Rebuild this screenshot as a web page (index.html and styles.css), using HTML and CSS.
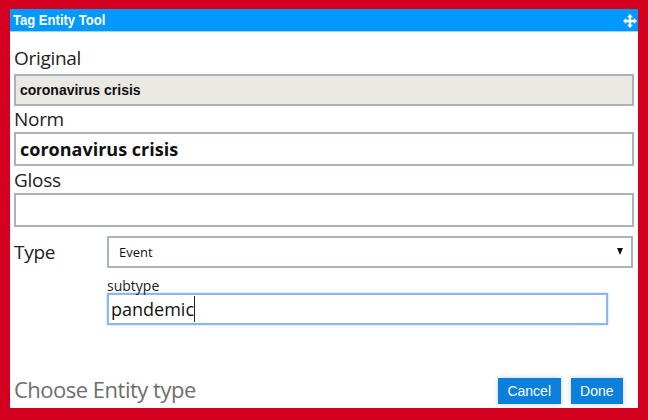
FILE: index.html
```html
<!DOCTYPE html>
<html>
<head>
<meta charset="utf-8">
<link rel="stylesheet" href="styles.css">
</head>
<body>
<div class="dialog">
  <div class="titlebar">
    <span class="title">Tag Entity Tool</span>
    <svg class="move" viewBox="0 0 14 14" width="14" height="14">
      <path d="M7 0 L10 3.2 L8.2 3.2 L8.2 5.8 L10.8 5.8 L10.8 4 L14 7 L10.8 10 L10.8 8.2 L8.2 8.2 L8.2 10.8 L10 10.8 L7 14 L4 10.8 L5.8 10.8 L5.8 8.2 L3.2 8.2 L3.2 10 L0 7 L3.2 4 L3.2 5.8 L5.8 5.8 L5.8 3.2 L4 3.2 Z" fill="#ffffff"/>
    </svg>
  </div>
  <div class="content">
    <div class="label label-first">Original</div>
    <div class="field field-readonly">coronavirus crisis</div>
    <div class="label label-norm">Norm</div>
    <div class="field field-norm">coronavirus crisis</div>
    <div class="label label-gloss">Gloss</div>
    <div class="field field-gloss"></div>
    <div class="type-row">
      <div class="type-label">Type</div>
      <div class="select">
        <span class="select-value">Event</span>
        <span class="select-arrow"></span>
      </div>
    </div>
    <div class="subtype">
      <div class="subtype-label">subtype</div>
      <div class="field field-focus"><span class="typed">pandemic</span><span class="caret"></span></div>
    </div>
    <div class="footer">
      <div class="hint">Choose Entity type</div>
      <div class="buttons">
        <div class="btn">Cancel</div>
        <div class="btn">Done</div>
      </div>
    </div>
  </div>
</div>
</body>
</html>
```
FILE: styles.css
```css
html, body {
  margin: 0;
  padding: 0;
}
body {
  background: #d3001f;
  width: 648px;
  height: 420px;
  overflow: hidden;
}
.dialog {
  margin: 9px 10px 0 10px;
  height: 399px;
  background: #ffffff;
  display: flex;
  flex-direction: column;
}
.titlebar {
  height: 22px;
  background: #0099ff;
  border-bottom: 1px solid #a6d3f5;
  display: flex;
  align-items: center;
  justify-content: space-between;
  padding: 0 1px 0 3px;
}
.title {
  display: inline-block;
  font-family: "Liberation Sans", Arial, sans-serif;
  font-weight: bold;
  font-size: 15px;
  color: #ffffff;
  line-height: 22px;
  transform: scaleX(0.87);
  transform-origin: left center;
}
.move {
  display: block;
  margin-top: 1px;
}
.content {
  flex: 1;
  display: flex;
  flex-direction: column;
  padding: 14px 4px 4px 4px;
  font-family: "Open Sans", sans-serif;
}
.label {
  font-size: 19px;
  letter-spacing: -0.3px;
  line-height: 24px;
  color: #222222;
}
.label-first {
  margin-bottom: 4px;
}
.label-norm {
  margin-top: 1px;
  margin-bottom: 1px;
}
.label-gloss {
  margin-top: 2px;
  margin-bottom: 1px;
}
.field {
  box-sizing: border-box;
  border: 2px solid #aab3bc;
  background: #ffffff;
}
.field-readonly {
  height: 32px;
  background: #e9e8e2;
  font-family: "Liberation Sans", Arial, sans-serif;
  font-weight: bold;
  font-size: 14px;
  line-height: 28px;
  padding-left: 4px;
  color: #111111;
}
.field-norm {
  height: 34px;
  font-weight: bold;
  font-size: 18px;
  line-height: 30px;
  padding-left: 4px;
  color: #111111;
}
.field-gloss {
  height: 34px;
}
.type-row {
  margin-top: 9px;
  display: flex;
  align-items: center;
}
.type-label {
  width: 93px;
  font-size: 19px;
  letter-spacing: -0.3px;
  line-height: 24px;
  color: #222222;
}
.select {
  flex: 1;
  margin-right: 1px;
  box-sizing: border-box;
  height: 32px;
  border: 2px solid #aab3bc;
  display: flex;
  align-items: center;
  justify-content: space-between;
  padding: 0 8px 0 10px;
}
.select-value {
  font-size: 13px;
  color: #111111;
}
.select-arrow {
  width: 0;
  height: 0;
  border-left: 3.5px solid transparent;
  border-right: 3.5px solid transparent;
  border-top: 7px solid #111111;
  margin-top: -1px;
}
.subtype {
  margin-top: 10px;
  margin-left: 93px;
  width: 501px;
}
.subtype-label {
  font-size: 14px;
  line-height: 15px;
  color: #222222;
}
.field-focus {
  height: 32px;
  border-color: #8ab8ee;
  box-shadow: 0 0 2px rgba(110, 165, 235, 0.6);
  display: flex;
  align-items: center;
  padding-left: 2px;
  font-size: 18px;
  color: #111111;
}
.typed {
  line-height: 26px;
}
.caret {
  display: block;
  width: 1px;
  height: 26px;
  background: #222222;
}
.footer {
  margin-top: auto;
  height: 26px;
  display: flex;
  align-items: center;
  justify-content: space-between;
}
.hint {
  font-size: 22px;
  letter-spacing: -0.5px;
  line-height: 26px;
  color: #6e6e6e;
  margin-top: -4px;
}
.buttons {
  display: flex;
  gap: 10px;
  margin-right: 11px;
}
.btn {
  height: 26px;
  line-height: 26px;
  padding: 0 9.5px;
  background: #0b7fdc;
  color: #ffffff;
  font-family: "Liberation Sans", Arial, sans-serif;
  font-size: 14px;
  box-shadow: 0 0 5px rgba(0, 0, 0, 0.22);
}
```
